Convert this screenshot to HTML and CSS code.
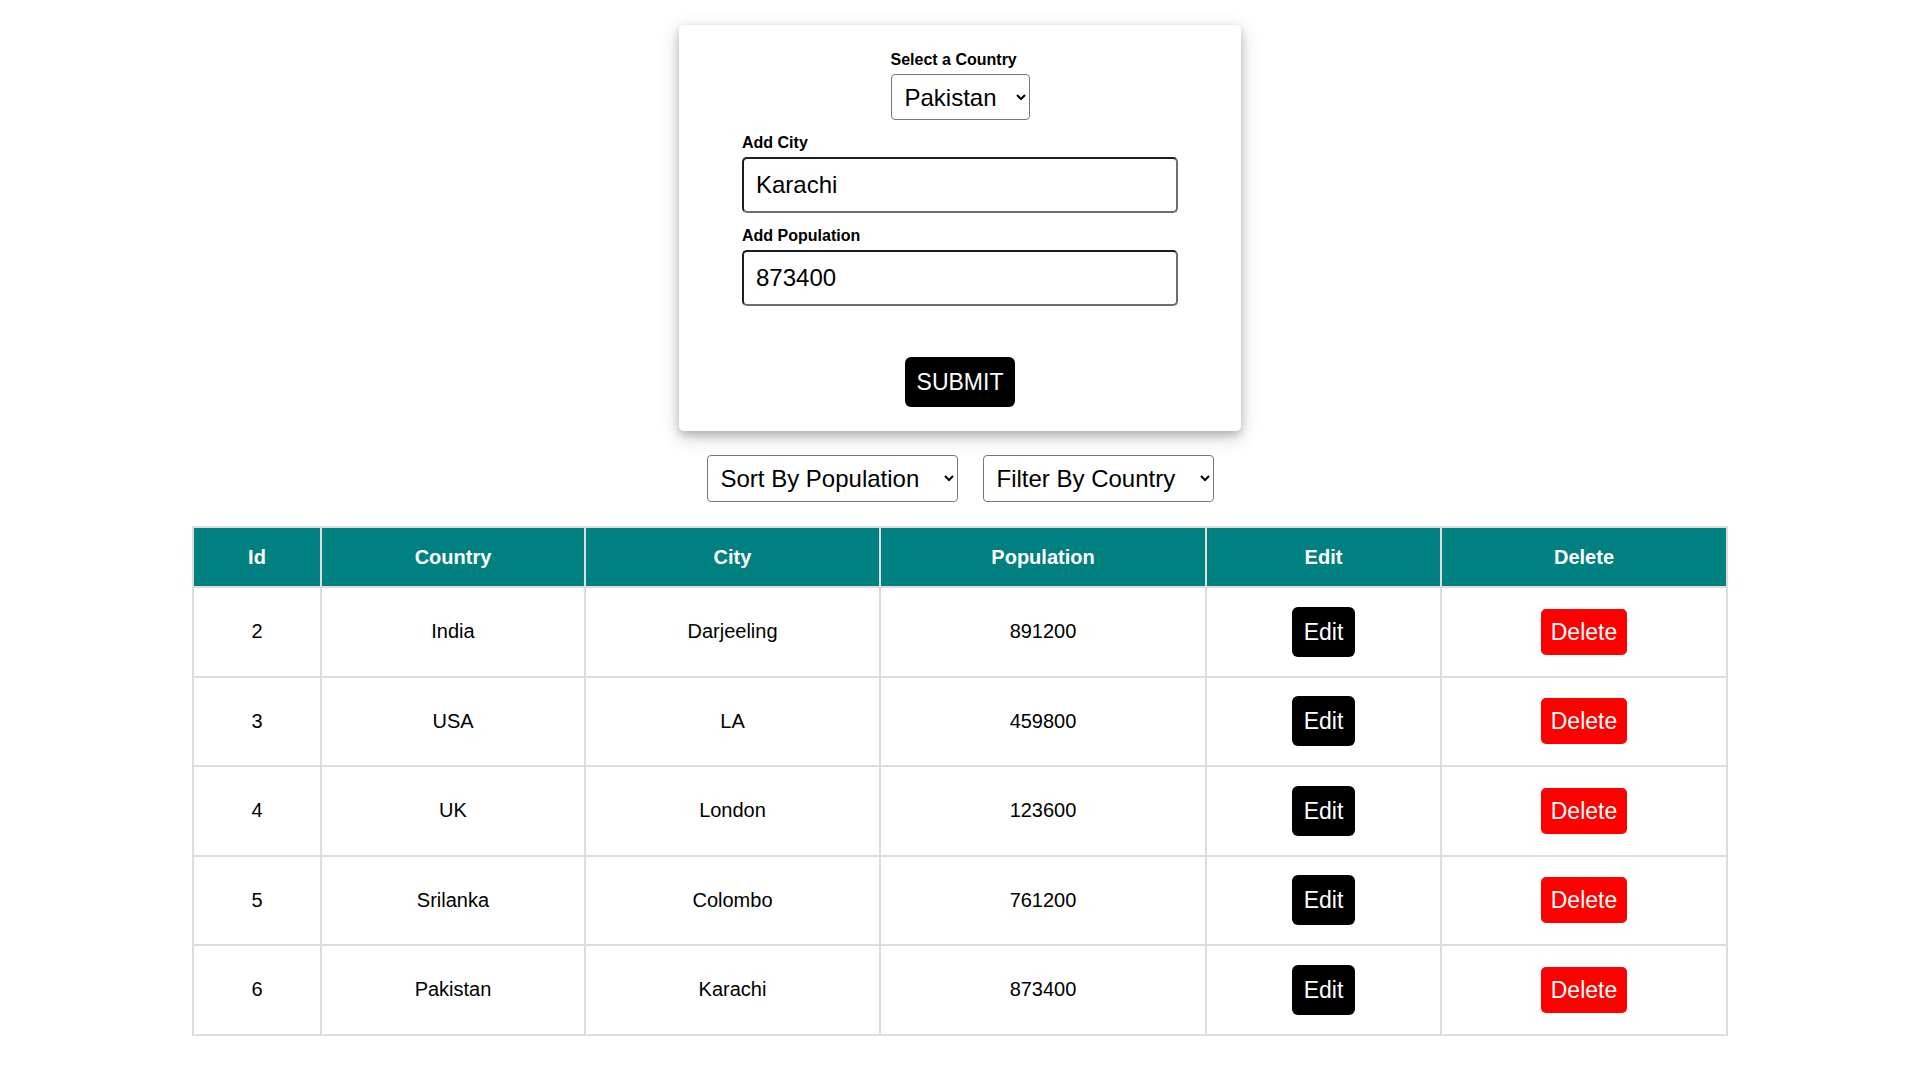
FILE: index.html
```html
<!DOCTYPE html>
<html lang="en">
<head>
<meta charset="utf-8">
<title>Cities</title>
<link rel="stylesheet" href="styles.css">
</head>
<body>
<div class="page">
  <form class="card">
    <div class="country-field">
      <label class="label">Select a Country</label>
      <select class="select select-country">
        <option>Pakistan</option>
        <option>India</option>
        <option>USA</option>
        <option>UK</option>
        <option>Srilanka</option>
      </select>
    </div>
    <div class="field">
      <label class="label">Add City</label>
      <input class="text-input" type="text" value="Karachi">
    </div>
    <div class="field">
      <label class="label">Add Population</label>
      <input class="text-input" type="text" value="873400">
    </div>
    <button type="button" class="btn btn-submit">SUBMIT</button>
  </form>

  <div class="controls">
    <select class="select select-wide select-sort">
      <option>Sort By Population</option>
    </select>
    <select class="select select-wide select-filter">
      <option>Filter By Country</option>
    </select>
  </div>

  <table class="data-table">
    <thead>
      <tr>
        <th class="c-id">Id</th>
        <th class="c-country">Country</th>
        <th class="c-city">City</th>
        <th class="c-pop">Population</th>
        <th class="c-edit">Edit</th>
        <th class="c-delete">Delete</th>
      </tr>
    </thead>
    <tbody>
      <tr>
        <td>2</td><td>India</td><td>Darjeeling</td><td>891200</td>
        <td><button type="button" class="btn btn-edit">Edit</button></td>
        <td><button type="button" class="btn btn-delete">Delete</button></td>
      </tr>
      <tr>
        <td>3</td><td>USA</td><td>LA</td><td>459800</td>
        <td><button type="button" class="btn btn-edit">Edit</button></td>
        <td><button type="button" class="btn btn-delete">Delete</button></td>
      </tr>
      <tr>
        <td>4</td><td>UK</td><td>London</td><td>123600</td>
        <td><button type="button" class="btn btn-edit">Edit</button></td>
        <td><button type="button" class="btn btn-delete">Delete</button></td>
      </tr>
      <tr>
        <td>5</td><td>Srilanka</td><td>Colombo</td><td>761200</td>
        <td><button type="button" class="btn btn-edit">Edit</button></td>
        <td><button type="button" class="btn btn-delete">Delete</button></td>
      </tr>
      <tr>
        <td>6</td><td>Pakistan</td><td>Karachi</td><td>873400</td>
        <td><button type="button" class="btn btn-edit">Edit</button></td>
        <td><button type="button" class="btn btn-delete">Delete</button></td>
      </tr>
    </tbody>
  </table>
</div>
</body>
</html>
```

FILE: styles.css
```css
html, body {
  margin: 0;
  padding: 0;
  background: #ffffff;
}

body {
  font-family: "Liberation Sans", Arial, sans-serif;
  color: #000000;
}

.page {
  padding-top: 25px;
  display: flex;
  flex-direction: column;
  align-items: center;
}

.card {
  width: 562px;
  box-sizing: border-box;
  padding: 26px 0 24px;
  display: flex;
  flex-direction: column;
  align-items: center;
  background: #ffffff;
  border-radius: 5px;
  box-shadow: 0 4px 8px rgba(0, 0, 0, 0.2), 0 6px 20px rgba(0, 0, 0, 0.19);
}

.label {
  display: block;
  font-size: 16px;
  font-weight: bold;
  line-height: 18px;
  margin-bottom: 5px;
}

.country-field {
  display: flex;
  flex-direction: column;
  align-items: flex-start;
  margin-bottom: 14px;
}

.field {
  width: 436px;
  margin-bottom: 14px;
}

.select {
  font-family: inherit;
  font-size: 24px;
  color: #000000;
  background: #ffffff;
  height: 46px;
  box-sizing: border-box;
  padding: 0 9px;
  border: 1px solid #767676;
  border-radius: 4px;
}

.select-country {
  width: 139px;
}

.select-wide {
  height: 47px;
}

.select-sort {
  width: 251px;
}

.select-filter {
  width: 231px;
}

.text-input {
  display: block;
  width: 436px;
  height: 56px;
  box-sizing: border-box;
  font-family: inherit;
  font-size: 24px;
  color: #000000;
  padding: 0 12px;
  border-width: 2px;
  border-style: solid;
  border-color: #1e1e1e #6e6e6e #6e6e6e #1e1e1e;
  border-radius: 5px;
  background: #ffffff;
}

.btn {
  font-family: inherit;
  font-size: 23px;
  line-height: 26px;
  color: #ffffff;
  background: #000000;
  border: none;
  border-radius: 6px;
  padding: 12px;
  cursor: pointer;
}

.btn-submit {
  margin-top: 37px;
}

.btn-delete {
  background: #ff0000;
  padding: 10px;
  border-radius: 5px;
}

.controls {
  display: flex;
  gap: 25px;
  margin-top: 24px;
}

.data-table {
  width: 1536px;
  margin-top: 24px;
  table-layout: fixed;
  border-collapse: separate;
  border-spacing: 0;
  border: 1px solid #dddddd;
}

.data-table th,
.data-table td {
  box-sizing: border-box;
  border: 1px solid #dddddd;
  text-align: center;
  vertical-align: middle;
  padding: 0 8px;
  font-size: 20px;
}

.data-table th {
  height: 60px;
  background: #008080;
  color: #ffffff;
  font-weight: bold;
}

.data-table td {
  height: 89.5px;
  color: #000000;
}

.c-id { width: 128px; }
.c-country { width: 264px; }
.c-city { width: 295px; }
.c-pop { width: 326px; }
.c-edit { width: 235px; }
.c-delete { width: 286px; }
```
